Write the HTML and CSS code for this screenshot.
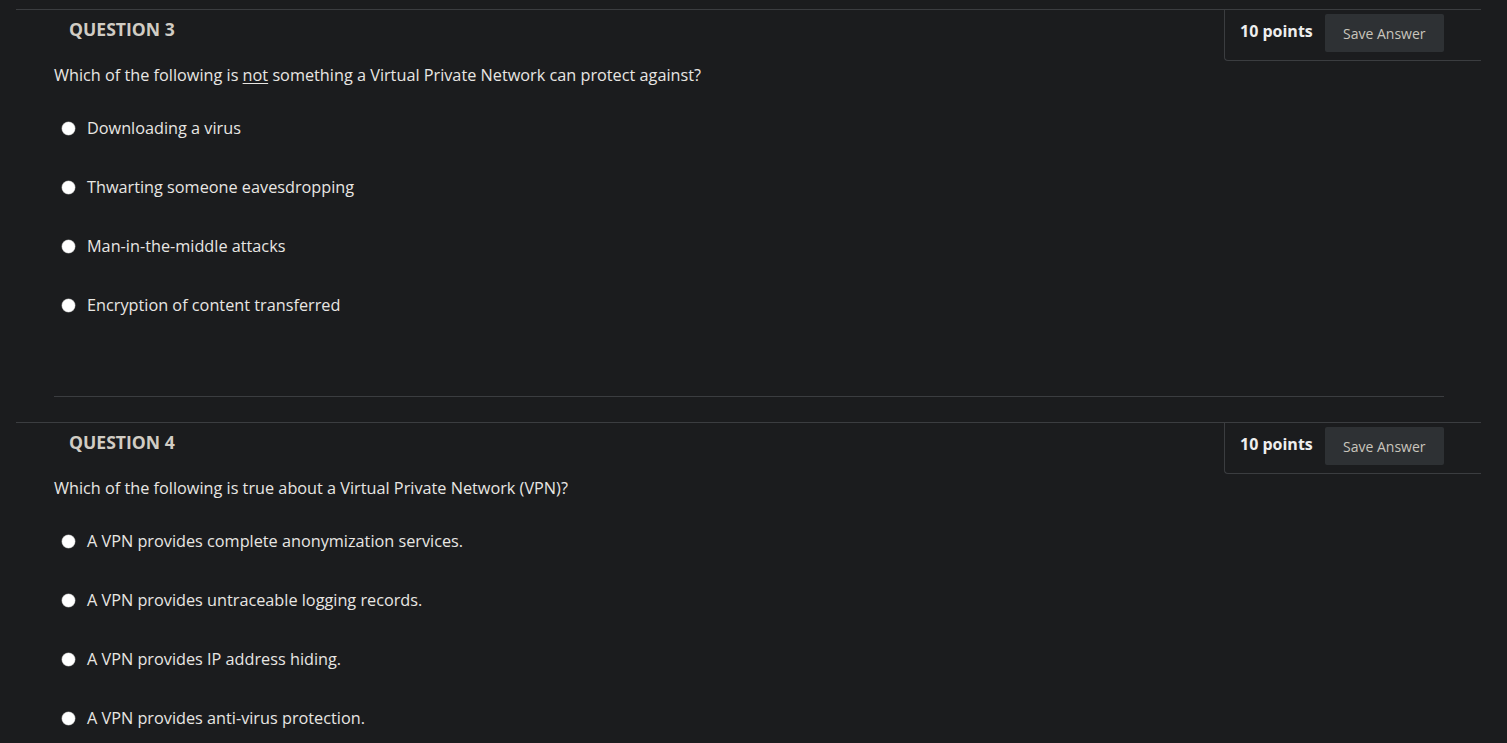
FILE: index.html
```html
<!DOCTYPE html>
<html lang="en">
<head>
<meta charset="utf-8">
<title>Quiz</title>
<link rel="stylesheet" href="styles.css">
</head>
<body>
<section class="question">
  <div class="q-head">
    <h3 class="q-title">QUESTION 3</h3>
    <div class="q-points">
      <span class="pts">10 points</span>
      <button class="save" type="button">Save Answer</button>
    </div>
  </div>
  <div class="q-body">
    <p class="q-text">Which of the following is <u>not</u> something a Virtual Private Network can protect against?</p>
    <ul class="answers">
      <li><span class="radio"></span><span class="label">Downloading a virus</span></li>
      <li><span class="radio"></span><span class="label">Thwarting someone eavesdropping</span></li>
      <li><span class="radio"></span><span class="label">Man-in-the-middle attacks</span></li>
      <li><span class="radio"></span><span class="label">Encryption of content transferred</span></li>
    </ul>
  </div>
</section>
<hr class="sep">
<section class="question">
  <div class="q-head">
    <h3 class="q-title">QUESTION 4</h3>
    <div class="q-points">
      <span class="pts">10 points</span>
      <button class="save" type="button">Save Answer</button>
    </div>
  </div>
  <div class="q-body">
    <p class="q-text">Which of the following is true about a Virtual Private Network (VPN)?</p>
    <ul class="answers">
      <li><span class="radio"></span><span class="label">A VPN provides complete anonymization services.</span></li>
      <li><span class="radio"></span><span class="label">A VPN provides untraceable logging records.</span></li>
      <li><span class="radio"></span><span class="label">A VPN provides IP address hiding.</span></li>
      <li><span class="radio"></span><span class="label">A VPN provides anti-virus protection.</span></li>
    </ul>
  </div>
</section>
<hr class="sep">
</body>
</html>
```
FILE: styles.css
```css
html, body {
  margin: 0;
  padding: 0;
  background: #1b1c1e;
  color: #e8e6e3;
  font-family: "Open Sans", "Noto Sans", sans-serif;
}

body {
  padding-top: 9px;
}

.question {
  margin: 0 26px 0 16px;
  border-top: 1px solid #3b3d40;
}

.q-head {
  display: flex;
  justify-content: space-between;
  align-items: flex-start;
}

.q-title {
  margin: 7px 0 0 53px;
  font-size: 17.6px;
  line-height: 24px;
  font-weight: 700;
  color: #d1ccc4;
}

.q-points {
  display: flex;
  align-items: flex-start;
  width: 241px;
  height: 50px;
  padding: 0 0 0 15px;
  border-left: 1px solid #3b3d40;
  border-bottom: 1px solid #3b3d40;
  border-bottom-left-radius: 4px;
}

.pts {
  margin-top: 10px;
  font-size: 16px;
  line-height: 22px;
  font-weight: 700;
  color: #eeeeee;
}

.save {
  margin-left: 12px;
  margin-top: 4px;
  width: 119px;
  height: 38px;
  padding: 0;
  border: none;
  border-radius: 2px;
  background: #2e3134;
  color: #c9c5bd;
  font-family: "Open Sans", "Noto Sans", sans-serif;
  font-size: 14px;
}

.q-body {
  padding-left: 38px;
}

.q-text {
  margin: 4px 0 0;
  font-size: 16.25px;
  line-height: 20px;
}

.q-text u {
  text-underline-offset: 2px;
}

.answers {
  list-style: none;
  margin: 33px 0 0;
  padding: 0 0 0 8px;
  display: flex;
  flex-direction: column;
  gap: 39px;
}

.answers li {
  display: flex;
  align-items: center;
  gap: 12px;
  font-size: 16.25px;
  line-height: 20px;
}

.radio {
  width: 13px;
  height: 13px;
  border-radius: 50%;
  background: #ffffff;
  box-shadow: 0 0 0 0.5px #9a9a9a;
  flex: none;
}

.sep {
  margin: 81px 63px 25px 54px;
  border: 0;
  border-top: 1px solid #3b3d40;
  height: 0;
}
```
